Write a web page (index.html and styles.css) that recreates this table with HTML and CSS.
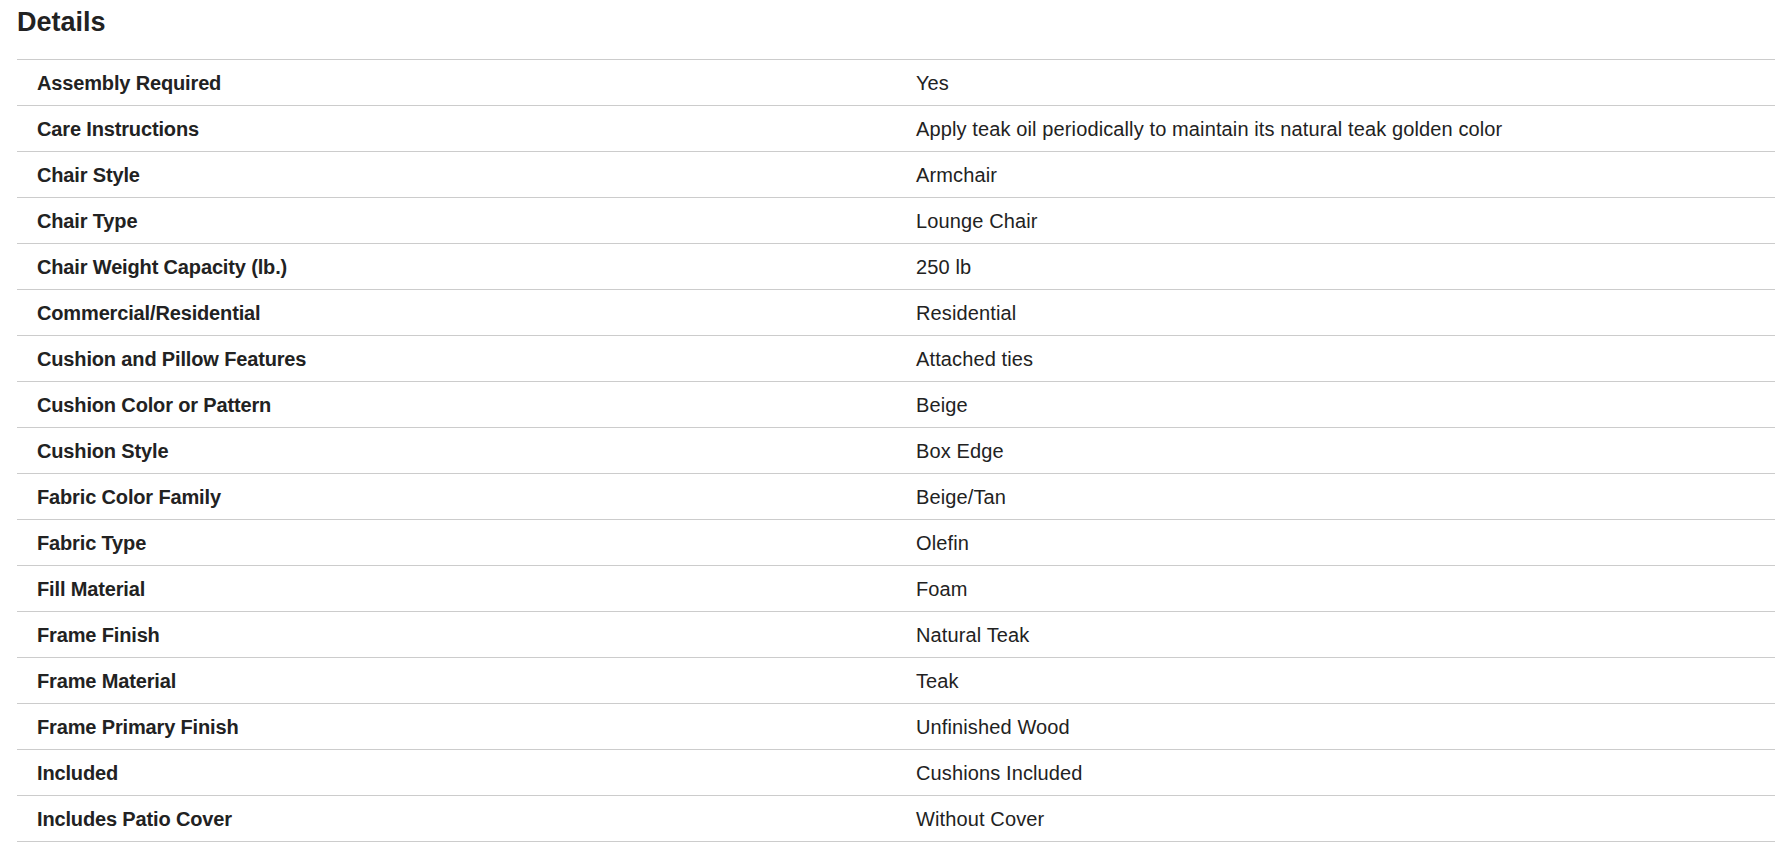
FILE: index.html
```html
<!DOCTYPE html>
<html lang="en">
<head>
<meta charset="utf-8">
<title>Details</title>
<link rel="stylesheet" href="styles.css">
</head>
<body>
<section class="details">
  <h2 class="details__title">Details</h2>
  <div class="specs">
    <div class="specs__row"><div class="specs__label">Assembly Required</div><div class="specs__value">Yes</div></div>
    <div class="specs__row"><div class="specs__label">Care Instructions</div><div class="specs__value">Apply teak oil periodically to maintain its natural teak golden color</div></div>
    <div class="specs__row"><div class="specs__label">Chair Style</div><div class="specs__value">Armchair</div></div>
    <div class="specs__row"><div class="specs__label">Chair Type</div><div class="specs__value">Lounge Chair</div></div>
    <div class="specs__row"><div class="specs__label">Chair Weight Capacity (lb.)</div><div class="specs__value">250 lb</div></div>
    <div class="specs__row"><div class="specs__label">Commercial/Residential</div><div class="specs__value">Residential</div></div>
    <div class="specs__row"><div class="specs__label">Cushion and Pillow Features</div><div class="specs__value">Attached ties</div></div>
    <div class="specs__row"><div class="specs__label">Cushion Color or Pattern</div><div class="specs__value">Beige</div></div>
    <div class="specs__row"><div class="specs__label">Cushion Style</div><div class="specs__value">Box Edge</div></div>
    <div class="specs__row"><div class="specs__label">Fabric Color Family</div><div class="specs__value">Beige/Tan</div></div>
    <div class="specs__row"><div class="specs__label">Fabric Type</div><div class="specs__value">Olefin</div></div>
    <div class="specs__row"><div class="specs__label">Fill Material</div><div class="specs__value">Foam</div></div>
    <div class="specs__row"><div class="specs__label">Frame Finish</div><div class="specs__value">Natural Teak</div></div>
    <div class="specs__row"><div class="specs__label">Frame Material</div><div class="specs__value">Teak</div></div>
    <div class="specs__row"><div class="specs__label">Frame Primary Finish</div><div class="specs__value">Unfinished Wood</div></div>
    <div class="specs__row"><div class="specs__label">Included</div><div class="specs__value">Cushions Included</div></div>
    <div class="specs__row"><div class="specs__label">Includes Patio Cover</div><div class="specs__value">Without Cover</div></div>
  </div>
</section>
</body>
</html>
```

FILE: styles.css
```css
html, body {
  margin: 0;
  padding: 0;
  background: #ffffff;
}

body {
  font-family: "Liberation Sans", Arial, sans-serif;
  color: #222222;
}

.details {
  padding: 0 15px 0 17px;
}

.details__title {
  margin: 0;
  padding: 7px 0 0 0;
  font-size: 27px;
  line-height: 31px;
  font-weight: 700;
  color: #222222;
}

.specs {
  margin-top: 21px;
  border-bottom: 1px solid #cccccc;
}

.specs__row {
  display: grid;
  grid-template-columns: 1fr 1fr;
  border-top: 1px solid #cccccc;
}

.specs__label,
.specs__value {
  padding: 12px 20px 10px 20px;
  font-size: 20px;
  line-height: 23px;
}

.specs__label {
  font-weight: 700;
  letter-spacing: -0.15px;
}

.specs__value {
  font-weight: 400;
  letter-spacing: 0.12px;
}
```
